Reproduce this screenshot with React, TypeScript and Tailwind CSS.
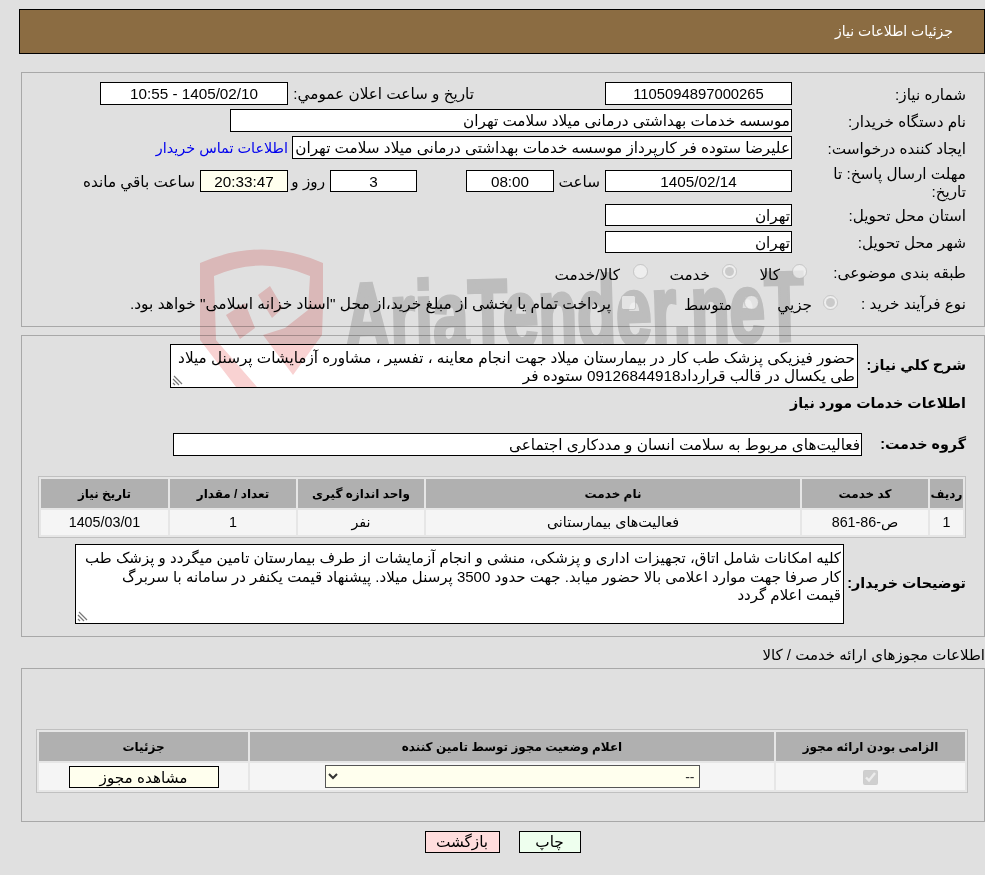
import React from "react";

const boxText = "border border-black bg-white text-black whitespace-nowrap overflow-hidden";
const boldLabel = "shrink-0 font-bold text-[14.3px] whitespace-nowrap";

function Field({ className, center, children }: { className: string; center?: boolean; children: React.ReactNode }) {
  return <div className={`${boxText} leading-[22px] ${center ? "text-center" : "pr-[1px]"} ${className}`}>{children}</div>;
}

function Row({ className, label, labelWidth = "w-[174px]", children }: { className: string; label: string; labelWidth?: string; children: React.ReactNode }) {
  return (
    <div className={`flex items-center ${className}`}>
      <div className={`shrink-0 leading-[18px] pt-[3px] ${labelWidth}`}>{label}</div>
      {children}
    </div>
  );
}

function ResizeHandle() {
  return (
    <svg className="absolute left-[1px] bottom-[1px]" width="11" height="11" viewBox="0 0 11 11">
      <path d="M1 4 L7 10 M1 8 L3 10 M2 1 L10 9" stroke="#777" strokeWidth="1.2" fill="none" />
    </svg>
  );
}

// sits over the page like the site's translucent background picture
function Watermark() {
  return (
    <svg className="absolute left-0 top-0 z-20 pointer-events-none mix-blend-multiply" width="985" height="400" viewBox="0 0 985 400">
      <path
        fill="#f9d2d2"
        d="M200 263 Q262 236 323 263 L323 307 L322 335 L293 375 L263 335 L285 328 L308 310 L310 276 Q262 255 214 276 L216 340 L257 387 L236 387 L200 340 Z"
      />
      <polygon fill="#f9d2d2" points="258,295 270,286 283,308 272,318" />
      <polygon fill="#f9d2d2" points="226,315 245,303 255,328 240,339" />
      <clipPath id="wm">
        <rect x="330" y="250" width="500" height="94" />
      </clipPath>
      <g clipPath="url(#wm)">
        <text
          x="345"
          y="352"
          direction="ltr"
          transform="rotate(-1.5 345 352)"
          fontFamily="'Liberation Sans', sans-serif"
          fontWeight="700"
          fontSize="98"
          fill="#d7d7d7"
          stroke="#d7d7d7"
          strokeWidth="4"
          textLength="460"
          lengthAdjust="spacingAndGlyphs"
        >
          AriaTender.neT
        </text>
      </g>
    </svg>
  );
}

export default function App() {
  return (
    <div dir="rtl" className="relative min-h-[875px] bg-[#e0e0e0] pt-[9px] text-black text-[15.25px] overflow-hidden font-['Liberation_Sans','DejaVu_Sans',sans-serif]">
      <Watermark />

      {/* header */}
      <div className="ml-[19px] h-[45px] bg-[#8b6c42] border border-black text-white text-[14px] flex items-center pr-[31px]">جزئیات اطلاعات نیاز</div>

      {/* main form */}
      <div className="ml-[21px] mt-[18px] border border-[#a8a8a8] pt-[7px] pr-[18px] pb-[10px]">
        <Row className="h-[27px]" label="شماره نیاز:">
          <Field className="w-[187px] h-[23px] text-[14.8px]" center>1105094897000265</Field>
          <div className="w-[181px] mr-[131px] pt-[1px] whitespace-nowrap">تاریخ و ساعت اعلان عمومي:</div>
          <Field className="w-[188px] h-[23px] mr-[5px]" center>1405/02/10 - 10:55</Field>
        </Row>
        <Row className="h-[27px]" label="نام دستگاه خریدار:">
          <Field className="w-[562px] h-[23px]">موسسه خدمات بهداشتی درمانی میلاد سلامت تهران</Field>
        </Row>
        <Row className="h-[27px]" label="ایجاد کننده درخواست:">
          <Field className="w-[500px] h-[23px]">علیرضا ستوده فر کارپرداز موسسه خدمات بهداشتی درمانی میلاد سلامت تهران</Field>
          <a className="text-[#0000ee] text-[14.4px] mr-[4px] pt-[2px] whitespace-nowrap">اطلاعات تماس خریدار</a>
        </Row>
        <Row className="h-[40px]" label="مهلت ارسال پاسخ: تا تاریخ:" labelWidth="w-[174px] pl-[24px]">
          <Field className="w-[187px] h-[22px]" center>1405/02/14</Field>
          <div className="w-[51px] pr-[5px] pt-[2px]">ساعت</div>
          <Field className="w-[88px] h-[22px]" center>08:00</Field>
          <Field className="w-[87px] h-[22px] mr-[49px]" center>3</Field>
          <div className="w-[42px] pr-[5px] pt-[2px] whitespace-nowrap">روز و</div>
          <Field className="w-[88px] h-[22px] !bg-[#ffffee]" center>20:33:47</Field>
          <div className="mr-[5px] pt-[2px] whitespace-nowrap">ساعت باقي مانده</div>
        </Row>
        <Row className="h-[27px]" label="استان محل تحویل:">
          <Field className="w-[187px] h-[22px]">تهران</Field>
        </Row>
        <Row className="h-[27px]" label="شهر محل تحویل:">
          <Field className="w-[187px] h-[22px]">تهران</Field>
        </Row>
        <Row className="h-[33px]" label="طبقه بندی موضوعی:" labelWidth="w-[159px]">
          <input type="radio" disabled className="relative z-30 w-[15px] h-[15px] m-0" />
          <span className="w-[55px] pr-[12px] pt-[7px]">کالا</span>
          <input type="radio" disabled defaultChecked className="relative z-30 w-[15px] h-[15px] m-0" />
          <span className="w-[74px] pr-[12px] pt-[7px]">خدمت</span>
          <input type="radio" disabled className="relative z-30 w-[15px] h-[15px] m-0" />
          <span className="pr-[13px] pt-[7px]">کالا/خدمت</span>
        </Row>
        <Row className="h-[28px]" label="نوع فرآیند خرید :" labelWidth="w-[128px]">
          <input type="radio" disabled defaultChecked className="relative z-30 w-[15px] h-[15px] m-0" />
          <span className="w-[64px] pr-[11px] pt-[7px]">جزيي</span>
          <input type="radio" disabled className="relative z-30 w-[15px] h-[15px] m-0" />
          <span className="w-[108px] pr-[12px] pt-[7px]">متوسط</span>
          <input type="checkbox" disabled className="relative z-30 w-[15px] h-[15px] m-0" />
          <span className="pr-[10px] pt-[3px] text-[15.45px] whitespace-nowrap">پرداخت تمام یا بخشی از مبلغ خرید،از محل "اسناد خزانه اسلامی" خواهد بود.</span>
        </Row>
      </div>

      {/* description section */}
      <div className="ml-[21px] mt-[8px] border border-[#a8a8a8] pr-[18px] pt-[8px] pb-[12px]">
        <div className="flex items-center">
          <div className={`w-[108px] ${boldLabel}`}>شرح کلي نیاز:</div>
          <div className="relative w-[688px] h-[44px] bg-white border border-black leading-[18px] px-[2px] pt-[4px]">
            حضور فیزیکی پزشک طب کار در بیمارستان میلاد  جهت انجام معاینه ، تفسیر ، مشاوره آزمایشات پرسنل میلاد طی یکسال در قالب قرارداد09126844918 ستوده فر
            <ResizeHandle />
          </div>
        </div>
        <div className={`mt-[5px] h-[20px] leading-[20px] ${boldLabel}`}>اطلاعات خدمات مورد نیاز</div>
        <div className="flex items-center mt-[20px]">
          <div className={`w-[104px] ${boldLabel}`}>گروه خدمت:</div>
          <Field className="w-[689px] h-[23px]">فعالیت‌های مربوط به سلامت انسان و مددکاری اجتماعی</Field>
        </div>

        <table className="mt-[20px] w-[928px] table-fixed border-separate border-spacing-0.5 border border-[#c0c0c0] bg-[#e6e6e6] text-[14.3px]">
          <thead className="text-[12px]">
            <tr className="h-[29px] bg-[#b0b0b0]">
              <th className="w-[33px] font-bold p-0">ردیف</th>
              <th className="w-[126px] font-bold p-0">کد خدمت</th>
              <th className="w-[374px] font-bold p-0">نام خدمت</th>
              <th className="w-[126px] font-bold p-0">واحد اندازه گیری</th>
              <th className="w-[126px] font-bold p-0">تعداد / مقدار</th>
              <th className="font-bold p-0">تاریخ نیاز</th>
            </tr>
          </thead>
          <tbody>
            <tr className="h-[25px] bg-[#f5f5f5] text-center">
              <td className="p-0">1</td>
              <td className="p-0">ص-86-861</td>
              <td className="p-0">فعالیت‌های بیمارستانی</td>
              <td className="p-0">نفر</td>
              <td className="p-0">1</td>
              <td className="p-0">1405/03/01</td>
            </tr>
          </tbody>
        </table>

        <div className="flex items-center mt-[6px]">
          <div className={`w-[122px] ${boldLabel}`}>توضیحات خریدار:</div>
          <div className="relative w-[769px] h-[80px] bg-white border border-black text-[15px] leading-[18.5px] px-[2px] pt-[4px]">
            کلیه امکانات شامل اتاق، تجهیزات اداری و پزشکی، منشی و انجام آزمایشات  از طرف بیمارستان تامین میگردد و پزشک طب کار صرفا جهت موارد اعلامی بالا حضور میابد. جهت حدود 3500 پرسنل میلاد. پیشنهاد قیمت یکنفر در سامانه با سربرگ
            <br />
            قیمت اعلام گردد
            <ResizeHandle />
          </div>
        </div>
      </div>

      {/* permits */}
      <div className="mt-[8px] h-[20px] leading-[20px] text-[15px] whitespace-nowrap">اطلاعات مجوزهای ارائه خدمت / کالا</div>
      <div className="ml-[21px] mt-[3px] border border-[#a8a8a8] pt-[60px] pr-[16px] pb-[28px]">
        <table className="w-[932px] table-fixed border-separate border-spacing-0.5 border border-[#c0c0c0] bg-[#e6e6e6] text-[12px]">
          <thead>
            <tr className="h-[29px] bg-[#b0b0b0]">
              <th className="w-[189px] font-bold p-0">الزامی بودن ارائه مجوز</th>
              <th className="w-[524px] font-bold p-0">اعلام وضعیت مجوز توسط تامین کننده</th>
              <th className="font-bold p-0">جزئیات</th>
            </tr>
          </thead>
          <tbody>
            <tr className="h-[27px] bg-[#f5f5f5]">
              <td className="p-0 text-center">
                <input type="checkbox" disabled defaultChecked className="relative z-30 w-[15px] h-[15px] m-0 align-middle" />
              </td>
              <td className="p-0">
                <select className="block mx-auto w-[375px] h-[23px] bg-[#ffffee] border border-[#555] text-[14px] text-[#333]">
                  <option>--</option>
                </select>
              </td>
              <td className="p-0">
                <div className="mx-auto w-[150px] h-[22px] bg-[#ffffee] border border-black text-center leading-[21px] text-[15.25px]">مشاهده مجوز</div>
              </td>
            </tr>
          </tbody>
        </table>
      </div>

      {/* actions */}
      <div className="mt-[9px] pl-[20px] flex justify-center gap-[19px]">
        <button className="w-[62px] h-[22px] bg-[#eeffee] border border-black leading-[20px]">چاپ</button>
        <button className="w-[75px] h-[22px] bg-[#ffdddd] border border-black leading-[20px]">بازگشت</button>
      </div>
    </div>
  );
}
